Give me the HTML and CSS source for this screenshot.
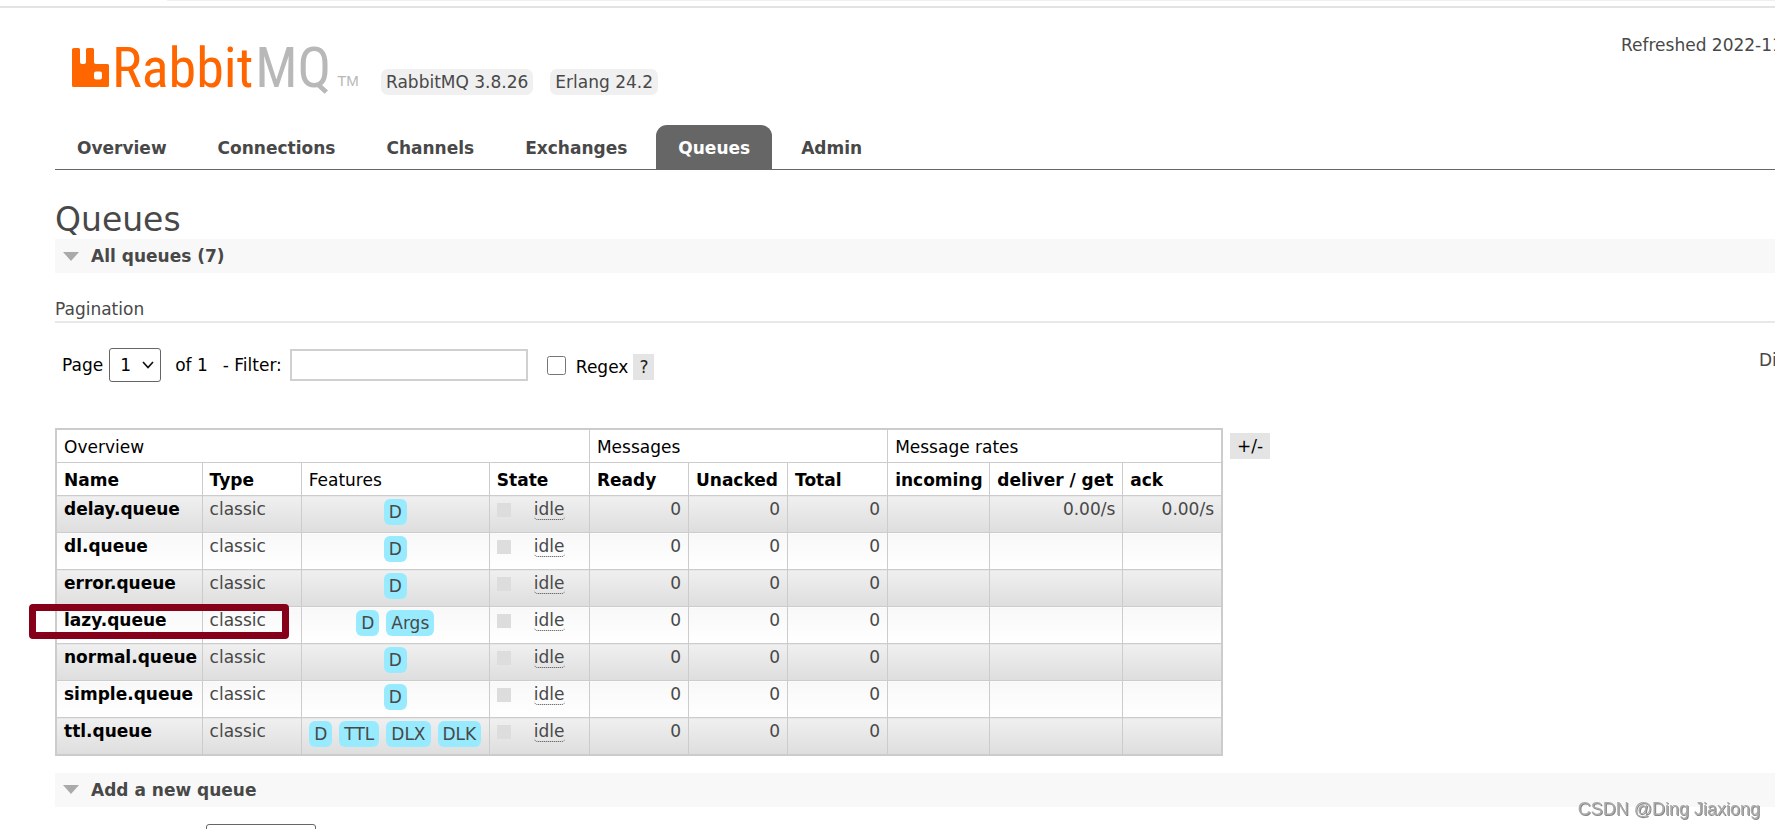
FILE: index.html
```html
<!DOCTYPE html>
<html lang="en">
<head>
<meta charset="utf-8">
<title>RabbitMQ Management</title>
<link rel="stylesheet" href="styles.css">
</head>
<body>
<div class="browser-edge"><div class="address-edge"></div></div>
<div class="page">
  <header class="header">
    <div class="brand">
      <a class="logo" href="#">
        <svg class="logo-mark" viewBox="0 0 37 39" aria-hidden="true"><path fill-rule="evenodd" fill="#f60" d="M2 0h4.500q1.500 0 1.500 1.500v12.500q0 2 2 2h2q2 0 2-2V1.500Q14 0 15.500 0H20.500Q22 0 22 1.500v12.500q0 2 2 2h11.500Q37 16 37 17.500v20Q37 39 35.500 39h-34Q0 39 0 37.500v-36Q0 0 2 0zM24 23.500q-2 0-2 2v4q0 2 2 2h4q2 0 2-2v-4q0-2-2-2z"/></svg>
        <span class="word">Rabbit<span class="word-mq">MQ</span></span><span class="tm">TM</span>
      </a>
      <span class="version">RabbitMQ 3.8.26</span>
      <span class="version">Erlang 24.2</span>
    </div>
    <div class="status">Refreshed 2022-11</div>
  </header>
  <nav class="tabs">
    <a href="#">Overview</a>
    <a href="#">Connections</a>
    <a href="#">Channels</a>
    <a href="#">Exchanges</a>
    <a href="#" class="selected">Queues</a>
    <a href="#">Admin</a>
  </nav>
  <main>
    <h1>Queues</h1>
    <h2 class="section">All queues (7)</h2>
    <h3 class="subhead">Pagination</h3>
    <div class="controls">
      <form class="filter-form">
        <label for="page">Page</label>
        <span class="select-box">
          <select id="page" class="page-select"><option>1</option></select>
          <svg class="chevron" viewBox="0 0 12 8" aria-hidden="true"><path d="M1 1l5 5.500L11 1" fill="none" stroke="#111" stroke-width="1.700"/></svg>
        </span>
        <span class="of">of 1</span>
        <label class="filter-label" for="filter">- Filter:</label>
        <input id="filter" class="filter" type="text">
        <input id="regex" class="regex" type="checkbox">
        <span class="regex-group"><label for="regex">Regex</label><button type="button" class="help">?</button></span>
      </form>
      <div class="displaying">Di</div>
    </div>
    <div class="table-wrap">
      <table class="list">
        <colgroup><col class="c-name"><col class="c-std"><col class="c-features"><col class="c-state"><col class="c-std"><col class="c-std"><col class="c-state"><col class="c-in"><col class="c-get"><col class="c-std"></colgroup>
        <thead>
          <tr><th class="plain" colspan="4">Overview</th><th class="plain" colspan="3">Messages</th><th class="plain" colspan="3">Message rates</th></tr>
          <tr><th>Name</th><th>Type</th><th class="plain">Features</th><th>State</th><th>Ready</th><th>Unacked</th><th>Total</th><th>incoming</th><th>deliver / get</th><th>ack</th></tr>
        </thead>
        <tbody>
          <tr><td><a href="#">delay.queue</a></td><td>classic</td><td class="features"><span class="tag">D</span></td><td><div class="state"><i></i><span>idle</span></div></td><td class="r">0</td><td class="r">0</td><td class="r">0</td><td></td><td class="r">0.00/s</td><td class="r">0.00/s</td></tr>
          <tr><td><a href="#">dl.queue</a></td><td>classic</td><td class="features"><span class="tag">D</span></td><td><div class="state"><i></i><span>idle</span></div></td><td class="r">0</td><td class="r">0</td><td class="r">0</td><td></td><td></td><td></td></tr>
          <tr><td><a href="#">error.queue</a></td><td>classic</td><td class="features"><span class="tag">D</span></td><td><div class="state"><i></i><span>idle</span></div></td><td class="r">0</td><td class="r">0</td><td class="r">0</td><td></td><td></td><td></td></tr>
          <tr><td class="marked"><a href="#">lazy.queue</a></td><td>classic</td><td class="features"><span class="tag">D</span> <span class="tag">Args</span></td><td><div class="state"><i></i><span>idle</span></div></td><td class="r">0</td><td class="r">0</td><td class="r">0</td><td></td><td></td><td></td></tr>
          <tr><td><a href="#">normal.queue</a></td><td>classic</td><td class="features"><span class="tag">D</span></td><td><div class="state"><i></i><span>idle</span></div></td><td class="r">0</td><td class="r">0</td><td class="r">0</td><td></td><td></td><td></td></tr>
          <tr><td><a href="#">simple.queue</a></td><td>classic</td><td class="features"><span class="tag">D</span></td><td><div class="state"><i></i><span>idle</span></div></td><td class="r">0</td><td class="r">0</td><td class="r">0</td><td></td><td></td><td></td></tr>
          <tr><td><a href="#">ttl.queue</a></td><td>classic</td><td class="features"><span class="tag">D</span> <span class="tag">TTL</span> <span class="tag">DLX</span> <span class="tag">DLK</span></td><td><div class="state"><i></i><span>idle</span></div></td><td class="r">0</td><td class="r">0</td><td class="r">0</td><td></td><td></td><td></td></tr>
        </tbody>
      </table>
      <button type="button" class="columns">+/-</button>
    </div>
    <h2 class="section">Add a new queue</h2>
    <form class="add-form"><select class="type-select" aria-label="Type"><option></option></select></form>
  </main>
</div>
<div class="watermark">CSDN @Ding Jiaxiong</div>
</body>
</html>
```
FILE: styles.css
```css
*, *::before, *::after { box-sizing: border-box; }
html { height: 100%; overflow: hidden; }
body {
  height: 100%;
  margin: 0;
  overflow: hidden;
  background: #fff;
  color: #484848;
  font: 17px/20px Verdana, "DejaVu Sans", sans-serif;
}
a { color: inherit; text-decoration: none; }
button, select, input { font: inherit; }

.browser-edge { height: 8px; border-bottom: 2px solid #e3e3e3; }
.address-edge { height: 1px; margin-left: 167px; background: #f0f0f0; }

.page { padding-left: 55px; }
.header { display: flex; justify-content: space-between; height: 117px; padding-top: 27px; }
.brand { display: flex; align-items: flex-start; }
.logo { display: flex; align-items: flex-end; width: 326px; height: 52px; padding-left: 17px; }
.logo-mark { width: 37px; height: 39px; }
.word {
  margin-left: 3px;
  color: #f60;
  font: 56px/38px "Liberation Sans Narrow", "Arial Narrow", "Roboto Condensed", "Open Sans Condensed", sans-serif;
}
.word-mq { margin-left: 2px; color: #b8b8b8; }
.tm { margin-left: 6px; color: #b8b8b8; font: 15px/12px "Liberation Sans", Arial, sans-serif; }
.version { margin: 34px 17px 0 0; padding: 3px 5px; border-radius: 7px; background: #f0f0f0; }
.status { width: 154px; white-space: nowrap; }

.tabs { display: flex; gap: 7px; border-bottom: 1px solid #666; }
.tabs a {
  height: 44px;
  padding: 13px 22px 11px;
  border-radius: 11px 11px 0 0;
  font-weight: bold;
}
.tabs .selected { background: #666; color: #fff; }

h1 { margin: 31px 0 0; font-size: 33px; line-height: 38px; font-weight: normal; }
.section {
  display: flex;
  align-items: center;
  gap: 12px;
  height: 34px;
  margin: 0;
  padding-left: 8px;
  background: #f8f8f8;
  font-size: 17px;
}
.section::before {
  content: "";
  border: 8px solid transparent;
  border-top: 9px solid #aaa;
  border-bottom: 0;
}
.subhead {
  margin: 26px 0 0;
  padding-bottom: 2px;
  border-bottom: 2px solid #e8e8e8;
  font-size: 17px;
  font-weight: normal;
}
.controls { display: flex; justify-content: space-between; padding: 25px 0 46px; }
.filter-form { display: flex; align-items: center; height: 34px; padding-left: 7px; color: #000; }
.select-box { display: grid; align-items: center; margin: 0 14px 0 6px; }
.page-select {
  grid-area: 1 / 1;
  appearance: none;
  width: 52px;
  height: 34px;
  padding-left: 10px;
  border: 1px solid #666;
  border-radius: 3px;
  background: #fff;
  color: #000;
}
.chevron { grid-area: 1 / 1; justify-self: end; width: 12px; height: 8px; margin-right: 7px; pointer-events: none; }
.filter-label { margin: 0 8px 0 15px; }
.filter { width: 238px; height: 32px; border: 2px solid #d0d0d0; }
.regex { width: 19px; height: 19px; margin: 0 10px 0 19px; }
.regex-group { display: flex; align-items: center; gap: 5px; padding-top: 4px; }
.help, .columns { padding: 0 6px; border: 0; height: 26px; background: #e4e4e4; color: #222; }
.displaying { width: 16px; padding-top: 2px; white-space: nowrap; }

.table-wrap { display: flex; align-items: flex-start; gap: 7px; margin-bottom: 17px; }
.columns { margin-top: 5px; padding: 0 7px; color: #000; }
.list { border-collapse: collapse; border: 2px solid #ccc; table-layout: fixed; width: 1168px; }
.c-name { width: 146px; }
.c-std { width: 99px; }
.c-features { width: 188px; }
.c-state { width: 100px; }
.c-in { width: 102px; }
.c-get { width: 133px; }
.list th, .list td { border: 1px solid #ccc; padding: 3px 7px; text-align: left; vertical-align: top; white-space: nowrap; }
.list th { height: 33px; padding: 7px 7px 5px; color: #000; }
.list .plain { font-weight: normal; }
.list td { height: 37px; }
.list td a { color: #000; font-weight: bold; }
.list tbody tr:nth-child(odd) td { background: linear-gradient(#f0f0f0, #dedede); }
.list tbody tr:nth-child(even) td { background: linear-gradient(#f8f8f8, #fff); }
.list .features { padding: 3px 6px 0; text-align: center; font-size: 0; }
.list .r { text-align: right; }
.tag {
  display: inline-block;
  margin-right: 7px;
  padding: 3px 5px;
  border-radius: 6px;
  background: #98ebff;
  font-size: 17px;
}
.tag:last-child { margin-right: 0; }
.state { display: flex; align-items: center; gap: 23px; }
.state i { width: 14px; height: 14px; background: #ddd; }
.state span { border-bottom: 1px dotted #444; border-radius: 4px; }
.list .marked { position: relative; }
.marked::after {
  content: "";
  position: absolute;
  left: -28px;
  top: -3px;
  width: 260px;
  height: 35px;
  border: 7px solid #850018;
  border-radius: 4px;
}
.add-form { padding: 17px 0 0 151px; }
.type-select { width: 110px; height: 34px; border: 1px solid #666; border-radius: 3px; background: #fff; }
.watermark {
  position: fixed;
  right: 15px;
  bottom: 10px;
  color: #aaa;
  font: 18px/20px "Liberation Sans", Arial, sans-serif;
  text-shadow: 1px 1px 0 #888;
}
```
